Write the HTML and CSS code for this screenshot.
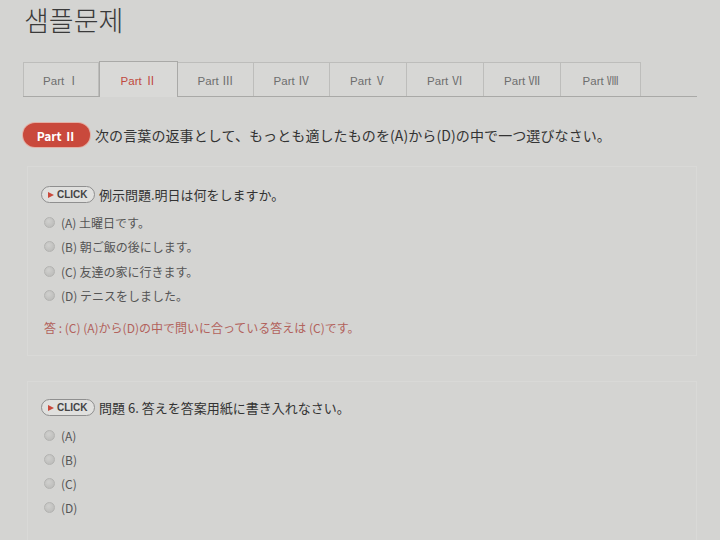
FILE: index.html
```html
<!DOCTYPE html>
<html lang="ja">
<head>
<meta charset="utf-8">
<link rel="stylesheet" href="styles.css">
</head>
<body>
<div class="page">
  <h1 class="title">샘플문제</h1>
  <div class="tabs">
    <div class="tab w76">Part Ⅰ</div>
    <div class="tab active w79">Part Ⅱ</div>
    <div class="tab w76">Part Ⅲ</div>
    <div class="tab w76">Part Ⅳ</div>
    <div class="tab w77">Part Ⅴ</div>
    <div class="tab w77">Part Ⅵ</div>
    <div class="tab w77">Part Ⅶ</div>
    <div class="tab w80">Part Ⅷ</div>
  </div>
  <div class="instr">
    <span class="badge">Part Ⅱ</span>
    <span class="instr-text">次の言葉の返事として、もっとも適したものを(A)から(D)の中で一つ選びなさい。</span>
  </div>
  <div class="box box1">
    <div class="q">
      <span class="click"><span class="tri"></span>CLICK</span>
      <span class="q-text">例示問題.明日は何をしますか。</span>
    </div>
    <div class="opt"><span class="radio"></span><span class="opt-text">(A) 土曜日です。</span></div>
    <div class="opt"><span class="radio"></span><span class="opt-text">(B) 朝ご飯の後にします。</span></div>
    <div class="opt"><span class="radio"></span><span class="opt-text">(C) 友達の家に行きます。</span></div>
    <div class="opt"><span class="radio"></span><span class="opt-text">(D) テニスをしました。</span></div>
    <div class="answer">答 : (C) (A)から(D)の中で問いに合っている答えは (C)です。</div>
  </div>
  <div class="box box2">
    <div class="q">
      <span class="click"><span class="tri"></span>CLICK</span>
      <span class="q-text">問題 6. 答えを答案用紙に書き入れなさい。</span>
    </div>
    <div class="opt"><span class="radio"></span><span class="opt-text">(A)</span></div>
    <div class="opt"><span class="radio"></span><span class="opt-text">(B)</span></div>
    <div class="opt"><span class="radio"></span><span class="opt-text">(C)</span></div>
    <div class="opt"><span class="radio"></span><span class="opt-text">(D)</span></div>
  </div>
</div>
</body>
</html>
```

FILE: styles.css
```css
html, body {
  margin: 0;
  padding: 0;
  background: #d4d4d2;
  width: 720px;
  height: 540px;
  overflow: hidden;
}
body {
  font-family: "Noto Sans CJK JP", "Noto Sans", sans-serif;
  color: #333;
}
.page {
  padding-left: 23px;
  width: 674px;
}
.title {
  margin: 0;
  height: 62px;
  padding-left: 1px;
  font-family: "Noto Sans CJK KR", sans-serif;
  font-weight: 300;
  font-size: 27px;
  line-height: 40px;
  color: #3a3a3a;
}
.tabs {
  display: flex;
  box-sizing: border-box;
  height: 35px;
  border-bottom: 1px solid #a9a9a7;
}
.tab {
  box-sizing: border-box;
  height: 34px;
  border: 1px solid #bdbdbb;
  border-left: none;
  border-bottom: none;
  background: #d7d7d5;
  font-family: "Liberation Sans", "Noto Sans CJK KR", sans-serif;
  font-size: 11.5px;
  color: #6e6e6e;
  display: flex;
  align-items: center;
  justify-content: center;
}
.tab:first-child { border-left: 1px solid #bdbdbb; }
.tab.active {
  height: 36px;
  margin-top: -1px;
  border: 1px solid #a9a9a7;
  border-bottom: none;
  background: #d9d9d7;
  color: #c04a40;
  position: relative;
  z-index: 1;
}
.w76 { width: 76px; }
.w77 { width: 77px; }
.w79 { width: 79px; }
.w80 { width: 80px; }

.instr {
  display: flex;
  align-items: center;
  margin-top: 26px;
  height: 24px;
}
.badge {
  display: inline-flex;
  align-items: center;
  justify-content: center;
  width: 67px;
  height: 24px;
  border-radius: 12px;
  background: #c9493c;
  box-shadow: 0 0 0 1px #e3b0a6;
  color: #fff;
  font-weight: bold;
  font-size: 12px;
  font-family: "Noto Sans CJK KR", "Noto Sans", sans-serif;
}
.instr-text {
  margin-left: 5px;
  font-size: 14px;
  color: #333;
  letter-spacing: 0.1px;
}

.box {
  margin-left: 4px;
  width: 670px;
  box-sizing: border-box;
  border: 1px solid #d9d9d7;
  padding-left: 13px;
}
.box1 {
  margin-top: 19px;
  padding-top: 19px;
  padding-bottom: 17px;
}
.box2 {
  margin-top: 25px;
  padding-top: 17px;
  padding-bottom: 30px;
}
.q {
  display: flex;
  align-items: center;
  height: 17px;
  margin-bottom: 7px;
}
.click {
  box-sizing: border-box;
  display: inline-flex;
  align-items: center;
  width: 54px;
  height: 17px;
  border: 1px solid #8f8f8f;
  border-radius: 9px;
  background: #e0e0de;
  padding-left: 6px;
  font-family: "Liberation Sans", sans-serif;
  font-size: 10px;
  font-weight: bold;
  color: #444;
}
.tri {
  width: 0;
  height: 0;
  border-top: 3.5px solid transparent;
  border-bottom: 3.5px solid transparent;
  border-left: 6px solid #c9493c;
  margin-right: 3px;
}
.q-text {
  margin-left: 4px;
  font-size: 13px;
  color: #333;
}
.opt {
  display: flex;
  align-items: center;
  height: 24.5px;
  padding-left: 3px;
}
.box2 .opt { height: 24px; }
.radio {
  box-sizing: border-box;
  width: 11px;
  height: 11px;
  border-radius: 50%;
  border: 1px solid #b3b3b1;
  background: radial-gradient(circle at 40% 35%, #d0d0ce, #b8b8b6);
}
.opt-text {
  margin-left: 6px;
  font-size: 12px;
  color: #555;
}
.answer {
  margin-top: 10px;
  height: 20px;
  line-height: 20px;
  padding-left: 3px;
  font-size: 12px;
  color: #b2625c;
}
```
